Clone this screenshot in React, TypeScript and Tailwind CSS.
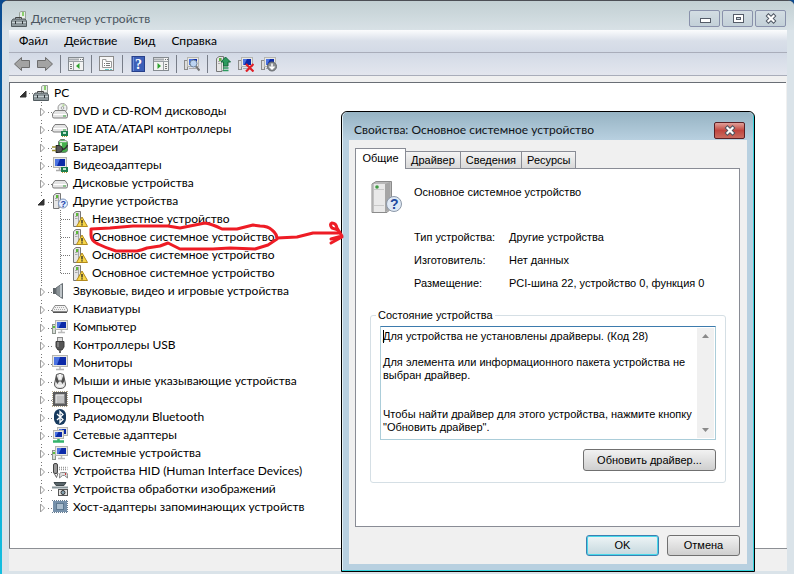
import type { ReactNode } from "react";

type IconName =
    | "pc"
    | "dvd"
    | "ide"
    | "battery"
    | "video"
    | "disk"
    | "other"
    | "warn"
    | "sound"
    | "keyboard"
    | "computer"
    | "usb"
    | "monitor"
    | "mouse"
    | "cpu"
    | "bluetooth"
    | "network"
    | "hid"
    | "imaging"
    | "storage";

interface Device {
    title: string;
    icon: IconName;
    children?: Device[];
}

const devices: Device[] = [
    { title: "DVD и CD-ROM дисководы", icon: "dvd" },
    { title: "IDE ATA/ATAPI контроллеры", icon: "ide" },
    { title: "Батареи", icon: "battery" },
    { title: "Видеоадаптеры", icon: "video" },
    { title: "Дисковые устройства", icon: "disk" },
    {
        title: "Другие устройства",
        icon: "other",
        children: [
            { title: "Неизвестное устройство", icon: "warn" },
            { title: "Основное системное устройство", icon: "warn" },
            { title: "Основное системное устройство", icon: "warn" },
            { title: "Основное системное устройство", icon: "warn" },
        ],
    },
    { title: "Звуковые, видео и игровые устройства", icon: "sound" },
    { title: "Клавиатуры", icon: "keyboard" },
    { title: "Компьютер", icon: "computer" },
    { title: "Контроллеры USB", icon: "usb" },
    { title: "Мониторы", icon: "monitor" },
    { title: "Мыши и иные указывающие устройства", icon: "mouse" },
    { title: "Процессоры", icon: "cpu" },
    { title: "Радиомодули Bluetooth", icon: "bluetooth" },
    { title: "Сетевые адаптеры", icon: "network" },
    { title: "Системные устройства", icon: "computer" },
    { title: "Устройства HID (Human Interface Devices)", icon: "hid" },
    { title: "Устройства обработки изображений", icon: "imaging" },
    { title: "Хост-адаптеры запоминающих устройств", icon: "storage" },
];

const statusText = `Для устройства не установлены драйверы. (Код 28)

Для элемента или информационного пакета устройства не
выбран драйвер.


Чтобы найти драйвер для этого устройства, нажмите кнопку
"Обновить драйвер".`;

/* ---------- icon parts ---------- */

function Drive({ y = 7 }: { y?: number }) {
    return (
        <g>
            <path d={`M3 ${y}H13L15.500 ${y + 3.500}V${y + 6}Q15.500 ${y + 7.500} 14 ${y + 7.500}H2Q.5 ${y + 7.500} .5 ${y + 6}V${y + 3.500}Z`} fill="#e4e4e4" stroke="#7d7d7d" />
            <path d={`M1.500 ${y + 4}H14.500`} stroke="#fff" />
            <path d={`M11 ${y + 5.500}h3`} stroke="#3aa03a" />
        </g>
    );
}

function Screen({ x = 0, y = 0, w = 16, h = 11 }: { x?: number; y?: number; w?: number; h?: number }) {
    return (
        <g>
            <rect x={x + 0.5} y={y + 0.5} width={w - 1} height={h - 1} fill="#e8e8e4" stroke="#b5b5b0" />
            <rect x={x + 2} y={y + 2} width={w - 4} height={h - 4} fill="#0c2aa8" />
            <path d={`M${x + 2} ${y + 2}h${(w - 4) / 2}l-3 ${h - 4}h-${(w - 4) / 2 - 3}z`} fill="#4a72e0" />
        </g>
    );
}

function Tower() {
    return (
        <g>
            <path d="M1.500 2.500L4 .5H8.500V13.500L7 15.500H1.500Z" fill="#e6e6e6" stroke="#777" />
            <path d="M6.500 2V15" stroke="#a5a5a5" />
            <path d="M3 5.500h2.500M3 7.500h2.500" stroke="#aaa" />
            <rect x="4" y="2" width="2" height="3" fill="#5dbb3a" />
        </g>
    );
}

function Card() {
    return (
        <g>
            <rect x="9" y="10" width="7" height="5" fill="#1c7f4e" />
            <rect x="11" y="11" width="3" height="2" fill="#bfe6cf" />
            <path d="M10.500 15v1M12.500 15v1M14.500 15v1" stroke="#b89a30" />
        </g>
    );
}

const icons: Record<IconName, ReactNode> = {
    pc: (
        <>
            <path d="M8.500 1.500L10 .5H14.500V9H8.500Z" fill="#e9eee9" stroke="#9aa39a" />
            <rect x="11" y="1" width="2" height="4" fill="#8bcf6d" />
            <path d="M4.500 8V6.500H10.500V8" fill="none" stroke="#444" />
            <path d="M2 8H14L15.500 10V15.500H.5V10Z" fill="#8c979b" stroke="#525b5f" />
            <path d="M1 11.500H15" stroke="#c7d0d3" />
            <path d="M4.500 10v3M11.500 10v3" stroke="#2f3538" />
        </>
    ),
    dvd: (
        <>
            <circle cx="10.500" cy="5" r="4.500" fill="#eef1f0" stroke="#979797" />
            <path d="M10.500 .8L13 2L10.500 5Z" fill="#b7d99c" />
            <circle cx="10.500" cy="5" r="1.300" fill="#fff" stroke="#a0a0a0" />
            <Drive y={7.5} />
        </>
    ),
    ide: (
        <>
            <Drive y={3.5} />
            <Card />
        </>
    ),
    battery: (
        <>
            <path d="M6.500 3Q6.500 1.500 8.500 1.500V.5H12.500V1.500Q15.500 1.500 15.500 3.500V11.500Q15.500 13.500 11 13.500Q6.500 13.500 6.500 11Z" fill="#45b04c" stroke="#6b7a6b" />
            <path d="M9 4v4" stroke="#c9f5bf" strokeWidth="2" />
            <path d="M7.500 2.500h7" stroke="#e6e6e6" strokeWidth="1.500" />
            <path d="M4 6.500Q10.500 6 10.500 10Q10.500 14 4 13.500Z" fill="#555" stroke="#222" />
            <path d="M0 8h4M0 11.500h4" stroke="#9a8f30" strokeWidth="1.500" />
            <path d="M10.500 10.500Q14 10 15.500 6" fill="none" stroke="#333" strokeWidth="1.500" />
        </>
    ),
    video: (
        <>
            <Screen x={1} w={14} h={11} />
            <path d="M4 13.500H9M7.500 11V13" stroke="#aaa" strokeWidth="1.500" />
            <Card />
        </>
    ),
    disk: <Drive y={5.5} />,
    other: (
        <>
            <Tower />
            <circle cx="11" cy="10.500" r="4.500" fill="#e6efff" stroke="#7990b8" />
            <text x="8.500" y="14" fontFamily="Liberation Sans" fontSize="9" fontWeight="bold" fill="#1c3fa8">?</text>
        </>
    ),
    warn: (
        <>
            <Tower />
            <path d="M10 6L15.500 15.500H4.500Z" fill="#f7d64a" stroke="#b28a1c" strokeLinejoin="round" />
            <path d="M10 9v3.500M10 13.300v1.200" stroke="#222" strokeWidth="1.300" />
        </>
    ),
    sound: (
        <>
            <rect x="1" y="5" width="4" height="6" fill="#5e6569" />
            <path d="M4 5L10.500 .5V15.500L4 11Z" fill="#8b9397" stroke="#666d72" />
            <path d="M9 2V14" stroke="#cfd5d8" strokeWidth="1.500" />
        </>
    ),
    keyboard: (
        <>
            <path d="M3 4.500H13L15.500 8.500V10.500H.5V8.500Z" fill="#f2f2f2" stroke="#888" strokeLinejoin="round" />
            <path d="M3 6.500H13M2 8.500H14" stroke="#aaa" strokeDasharray="1 1" />
            <path d="M1 11.500H15" stroke="#555" />
        </>
    ),
    computer: (
        <>
            <rect x="0.500" y="5.500" width="3" height="9" fill="#d6dcd6" stroke="#8c948c" />
            <rect x="1" y="7" width="2" height="2" fill="#5cc03c" />
            <Screen x={3} y={1} w={13} h={10} />
            <path d="M9.500 11V13M6 13.500H13" stroke="#bbb" strokeWidth="1.500" />
        </>
    ),
    usb: (
        <>
            <rect x="5.500" y="0.500" width="5" height="4" fill="#ddd" stroke="#888" />
            <path d="M4 4.500H12V10L10 13H6L4 10Z" fill="#555" stroke="#3c3c3c" />
            <path d="M6 5V10" stroke="#8e8e8e" strokeWidth="1.500" />
            <path d="M8 13V16" stroke="#666" strokeWidth="2" />
        </>
    ),
    monitor: (
        <>
            <Screen w={16} h={12} />
            <path d="M8 12V14M4 14.500H12" stroke="#b5b5b5" strokeWidth="1.500" />
        </>
    ),
    mouse: (
        <>
            <path d="M4.500 1.500Q8 -.5 11.500 1.500L13.500 11Q13.500 15.500 8 15.500Q2.500 15.500 2.500 11Z" fill="#e4e4e4" stroke="#555" />
            <path d="M4.500 2L6.500 7.500H9.500L11.500 2L12.500 8L10.500 11L9 8.500H7L5.500 11L3.500 8Z" fill="#4e4e4e" />
            <rect x="7" y="1" width="2" height="5" fill="#f5f5f5" />
            <path d="M5 12.500Q8 14 11 12.500" fill="none" stroke="#fff" />
        </>
    ),
    cpu: (
        <>
            <path d="M0 .5H16M0 15.500H16M.5 0V16M15.500 0V16" stroke="#b3a88c" strokeDasharray="1 1" />
            <rect x="1" y="1" width="14" height="14" fill="#5c5c5c" />
            <rect x="3.500" y="3.500" width="9" height="9" fill="#c2c2c2" stroke="#8a8a8a" />
            <path d="M4 12V4H12" fill="none" stroke="#eee" />
        </>
    ),
    bluetooth: (
        <>
            <rect x="2" y="0" width="12" height="16" rx="6" fill="#173a5e" />
            <path d="M5 5L11 10.500L8 13.500V2.500L11 5.500L5 11" fill="none" stroke="#fff" strokeWidth="1.300" />
        </>
    ),
    network: (
        <>
            <Screen x={5} y={0} w={11} h={9} />
            <Screen x={1} y={3} w={11} h={9} />
            <path d="M1 14.500H12M6.500 12V14" stroke="#34b46c" strokeWidth="2.500" />
        </>
    ),
    hid: (
        <>
            <rect x="1.500" y="0.500" width="4" height="10" rx="1.500" fill="#999" stroke="#444" />
            <path d="M2 10L4.500 14.500L6 10" fill="none" stroke="#666" />
            <path d="M7 4.500H15.500M7 6.500H15.500" stroke="#999" strokeWidth="1.500" strokeDasharray="1 1" />
            <path d="M7.500 15Q7 9 9.500 9.500H13.500Q16 9 15.500 15L12.500 12.500H10.500Z" fill="#dedede" stroke="#888" />
            <rect x="13" y="10" width="1" height="2" fill="#c33" />
        </>
    ),
    imaging: (
        <>
            <path d="M2 1.500H14L12 4.500H4Z" fill="#59656a" stroke="#3e484c" />
            <path d="M0 6.500H16" stroke="#89969b" strokeWidth="2" />
            <rect x="6.500" y="8.500" width="9" height="6" fill="#e2e2e2" stroke="#555" />
            <circle cx="11" cy="11.500" r="2" fill="#8aa5b4" stroke="#333" />
        </>
    ),
    storage: (
        <>
            <path d="M0 1.500H16M0 13.500H16M15.500 2V13" stroke="#667d92" strokeDasharray="1 1" />
            <rect x="1" y="2" width="14" height="11" fill="#7590aa" />
            <rect x="4.500" y="4.500" width="7" height="6" fill="#a9bccd" stroke="#5c7890" />
        </>
    ),
};

function DeviceIcon({ name }: { name: IconName }) {
    return (
        <svg className="size-4 shrink-0" viewBox="0 0 16 16" aria-hidden="true">
            {icons[name]}
        </svg>
    );
}

/* Dotted guide lines with the expander triangle on top */
function Branch({ open, last }: { open?: boolean; last?: boolean }) {
    return (
        <svg className="h-[18px] w-[15px] shrink-0" viewBox="0 0 15 18" aria-hidden="true">
            <path d={`M4.500 0V${last ? 9 : 18}M11 10.500H15`} stroke="#777" strokeDasharray="1 2" />
            <rect x="1" y="4" width="8" height="12" fill="#fff" />
            {open ? (
                <path d="M7 7V13H1Z" fill="#333" stroke="#333" strokeLinejoin="round" />
            ) : (
                <path d="M3.500 6V14L7.500 10Z" fill="#fff" stroke="#999" />
            )}
        </svg>
    );
}

function ChildBranch({ last }: { last: boolean }) {
    return (
        <svg className="h-[18px] w-[35px] shrink-0" viewBox="0 0 35 18" aria-hidden="true">
            <path d={`M4.500 0V18M23.500 0V${last ? 10 : 18}M24 9.500H34`} stroke="#777" strokeDasharray="1 1" />
        </svg>
    );
}

function TreeRow({ device, last }: { device: Device; last: boolean }) {
    return (
        <li role="treeitem" aria-expanded={device.children ? true : undefined}>
            <div className="flex h-[18px] items-center pl-[27px]">
                <Branch open={!!device.children} last={last} />
                <DeviceIcon name={device.icon} />
                <span className="pl-[5px] whitespace-nowrap">{device.title}</span>
            </div>
            {device.children && (
                <ul role="group">
                    {device.children.map((child, i) => (
                        <li key={i} role="treeitem" className="flex h-[18px] items-center pl-[27px]">
                            <ChildBranch last={i === device.children!.length - 1} />
                            <DeviceIcon name={child.icon} />
                            <span className="pl-1 whitespace-nowrap">{child.title}</span>
                        </li>
                    ))}
                </ul>
            )}
        </li>
    );
}

/* ---------- toolbar ---------- */

function ToolButton({ label, children }: { label: string; children: ReactNode }) {
    return (
        <button type="button" aria-label={label} className="flex h-[22px] w-[23px] items-center justify-center">
            <svg className="size-4" viewBox="0 0 16 16" aria-hidden="true">
                {children}
            </svg>
        </button>
    );
}

function Separator() {
    return (
        <div className="flex w-2 justify-center">
            <div className="h-[18px] w-px bg-[#777d88]" />
        </div>
    );
}

function ConsoleFrame() {
    return (
        <>
            <rect x="0.500" y="1.500" width="15" height="13" fill="#f3f3f3" stroke="#858b90" />
            <path d="M1 3.500H11" stroke="#a8adb2" strokeWidth="2" />
            <path d="M12 3.500h3" stroke="#6d7378" strokeDasharray="1 1" />
            <path d="M1 5.500H15" stroke="#9aa0a5" />
        </>
    );
}

function MiniPc() {
    return (
        <>
            <rect x="0.500" y="4.500" width="3" height="9" fill="#ddd" stroke="#8c8c8c" />
            <Screen x={3} y={1} w={12} h={10} />
            <path d="M5 12.500H12" stroke="#aaa" />
        </>
    );
}

function Toolbar() {
    return (
        <div role="toolbar" className="flex h-[22px] items-center bg-gradient-to-b from-[#d3dae6] to-[#e3e6ee] pl-px">
            <ToolButton label="Назад">
                <path d="M.5 8L7.500 1.500V4.500H15.500V11.500H7.500V14.500Z" fill="#a3a3a3" stroke="#6d6d6d" strokeLinejoin="round" />
            </ToolButton>
            <ToolButton label="Вперед">
                <path d="M15.500 8L8.500 1.500V4.500H.5V11.500H8.500V14.500Z" fill="#a3a3a3" stroke="#6d6d6d" strokeLinejoin="round" />
            </ToolButton>
            <Separator />
            <ToolButton label="Показать дерево консоли">
                <ConsoleFrame />
                <path d="M5.500 6V14" stroke="#9aa0a5" />
                <path d="M2 8.500h2M2 10.500h2M2 12.500h2" stroke="#777" />
                <path d="M11.500 7V13L8 10Z" fill="#2fa32f" />
            </ToolButton>
            <Separator />
            <ToolButton label="Свойства">
                <rect x="0.500" y="0.500" width="14" height="14" fill="#f6f6f6" stroke="#8a8a8a" />
                <path d="M3.500 11.500V3.500H7V5.500H12.500V11.500Z" fill="#fff" stroke="#999" />
                <path d="M5 7.500h1M7 7.500h4M5 9.500h1M7 9.500h4" stroke="#777" />
                <path d="M6 13.500h4M11 13.500h2" stroke="#5fc5c5" />
            </ToolButton>
            <Separator />
            <ToolButton label="Справка">
                <rect x="2" y="0.500" width="12.500" height="15" fill="#3d60b8" stroke="#27408b" />
                <path d="M3.500 1V15" stroke="#6f8fd8" />
                <text x="5" y="13" fontFamily="Liberation Serif" fontSize="14" fontWeight="bold" fill="#fff">?</text>
            </ToolButton>
            <ToolButton label="Показать панель действий">
                <ConsoleFrame />
                <path d="M10.500 6V14" stroke="#9aa0a5" />
                <path d="M12 8.500h2M12 10.500h2M12 12.500h2" stroke="#777" />
                <path d="M4.500 7V13L8 10Z" fill="#2fa32f" />
            </ToolButton>
            <Separator />
            <ToolButton label="Обновить конфигурацию оборудования">
                <MiniPc />
                <circle cx="9.500" cy="7.500" r="3.500" fill="#bcd4f2" stroke="#70859c" />
                <path d="M12 10.500L15.500 14.500" stroke="#777" strokeWidth="2" />
            </ToolButton>
            <Separator />
            <ToolButton label="Обновить драйверы">
                <Tower />
                <path d="M10.500 1L15.500 6H13V10H8.500V6H6Z" fill="#2c9a5e" stroke="#17683b" />
                <path d="M8 12H13.500M8 14.500H13.500" stroke="#2c9a5e" strokeWidth="1.500" />
            </ToolButton>
            <ToolButton label="Удалить">
                <MiniPc />
                <path d="M8 8L15.500 15.500M15.500 8L8 15.500" stroke="#e01f26" strokeWidth="2.200" />
            </ToolButton>
            <ToolButton label="Отключить">
                <MiniPc />
                <circle cx="11" cy="10.500" r="4.500" fill="#8b8f93" stroke="#64686c" />
                <path d="M11 7.500V12M8.500 10.500L11 13L13.500 10.500" fill="none" stroke="#fff" strokeWidth="1.500" />
            </ToolButton>
        </div>
    );
}

/* ---------- main window ---------- */

function CaptionButton({ label, children }: { label: string; children: ReactNode }) {
    return (
        <button
            type="button"
            aria-label={label}
            className="flex h-[17px] w-[31px] items-center justify-center rounded-[2px] border border-[#8991ab] bg-gradient-to-b from-[#d3dde3] to-[#c3d0d8]"
        >
            <svg className="h-[11px] w-3" viewBox="0 0 12 11" aria-hidden="true">
                {children}
            </svg>
        </button>
    );
}

function CloseGlyph() {
    return (
        <>
            <path d="M2 1.500L10 9.500M10 1.500L2 9.500" stroke="#4d5561" strokeWidth="4" />
            <path d="M2.700 2.200L9.300 8.800M9.300 2.200L2.700 8.800" stroke="#fff" strokeWidth="2.200" />
        </>
    );
}

function ManagerWindow() {
    return (
        <main className="flex min-h-screen flex-1 flex-col rounded-t-[6px] border-t border-[#4c4f55] bg-[#dae3e9] px-[7px]">

            <header className="-mx-[7px] flex h-[29px] items-center rounded-t-[5px] bg-gradient-to-b from-[#c2d0d3] to-[#d8e1e6] pt-1.5 pr-2 pl-[9px]">
                <DeviceIcon name="pc" />
                <h1 className="flex-1 pl-1 text-[12px] text-[#4b5560]">Диспетчер устройств</h1>
                <div className="flex gap-0.5">
                    <CaptionButton label="Свернуть">
                        <rect x="1.500" y="5.500" width="10" height="4" fill="#fff" stroke="#555c68" />
                    </CaptionButton>
                    <CaptionButton label="Развернуть">
                        <rect x="1.500" y="1.500" width="10" height="8" fill="#fff" stroke="#555c68" />
                        <rect x="4.500" y="4.500" width="4" height="2" fill="#c9d5dc" stroke="#555c68" />
                    </CaptionButton>
                    <CaptionButton label="Закрыть">
                        <CloseGlyph />
                    </CaptionButton>
                </div>
            </header>

            <nav className="flex h-[23px] items-center gap-4 border-b border-[#a9adba] bg-gradient-to-b from-[#fbfcfd] via-[#d9dfe9] to-[#d3dae6] pl-2.5">
                <button type="button">Файл</button>
                <button type="button">Действие</button>
                <button type="button">Вид</button>
                <button type="button">Справка</button>
            </nav>

            <Toolbar />

            <section className="flex flex-1 flex-col border-t border-[#a9adba] bg-[#f0f0f0] pt-1.5 pr-px">
                <ul role="tree" className="flex-1 border-t border-l border-[#696e75] bg-white pt-px">
                    <li role="treeitem" aria-expanded="true">
                        <div className="flex h-[18px] items-center pl-[9px]">
                            <svg className="h-[18px] w-[14px]" viewBox="0 0 14 18" aria-hidden="true">
                                <path d="M7 7V13H1Z" fill="#333" stroke="#333" strokeLinejoin="round" />
                                <path d="M10 9.500H14" stroke="#888" strokeDasharray="1 2" />
                            </svg>
                            <DeviceIcon name="pc" />
                            <span className="pl-[5px]">PC</span>
                        </div>
                        <ul role="group">
                            {devices.map((device, i) => (
                                <TreeRow key={device.title} device={device} last={i === devices.length - 1} />
                            ))}
                        </ul>
                    </li>
                </ul>
            </section>

            <footer className="mb-[3px] h-[23px] border-t border-[#8c8f94] bg-[#f0f0f0]" />

        </main>
    );
}

/* ---------- properties dialog ---------- */

const tabs = ["Драйвер", "Сведения", "Ресурсы"];

const info = [
    ["Тип устройства:", "Другие устройства"],
    ["Изготовитель:", "Нет данных"],
    ["Размещение:", "PCI-шина 22, устройство 0, функция 0"],
];

function PropertiesDialog() {
    return (
        <div
            role="dialog"
            aria-labelledby="dialog-title"
            className="absolute top-[111px] left-[341px] w-[414px] rounded-t-[6px] border border-black bg-[#b8d0e0] px-[7px] pb-[7px] text-[11px] shadow-[inset_-1px_-1px_0_#35d3dc,inset_1px_1px_0_#e3f1f6]"
            style={{ fontFamily: '"Liberation Sans", Arial, sans-serif' }}
        >
            <header className="-mx-1.5 flex h-7 items-center rounded-t-[5px] bg-gradient-to-b from-[#96b3c3] to-[#b8d0e0] px-1.5 pt-2">
                <h2
                    id="dialog-title"
                    className="flex-1 pl-[5px] text-[12px] text-[#101418]"
                    style={{ fontFamily: 'Lato, Roboto, sans-serif' }}
                >
                    Свойства: Основное системное устройство
                </h2>
                <button
                    type="button"
                    aria-label="Закрыть"
                    className="mr-0.5 flex h-[17px] w-[31px] items-center justify-center rounded-[2px] border border-[#5a1f24] bg-gradient-to-b from-[#e0a09a] via-[#c0453f] to-[#c96a5f]"
                >
                    <svg className="h-[11px] w-3" viewBox="0 0 12 11" aria-hidden="true">
                        <CloseGlyph />
                    </svg>
                </button>
            </header>

            <div className="bg-[#f0f0f0] pt-2 pr-[7px] pb-2 pl-1.5">

                <div role="tablist" className="flex items-end">
                    <button
                        type="button"
                        role="tab"
                        aria-selected="true"
                        className="relative z-10 -mb-px h-[21px] w-[51px] border border-b-0 border-[#898c95] bg-white pb-0.5"
                    >
                        Общие
                    </button>
                    {tabs.map((tab) => (
                        <button
                            key={tab}
                            type="button"
                            role="tab"
                            aria-selected="false"
                            className="h-[17px] border border-b-0 border-l-0 border-[#898c95] bg-gradient-to-b from-[#f4f4f4] to-[#d9d9d9] px-[5px]"
                        >
                            {tab}
                        </button>
                    ))}
                </div>

                <div role="tabpanel" className="h-[359px] border border-[#898c95] bg-white px-3.5 pt-3">
                    <div className="flex h-8 gap-3">
                        <svg className="size-8" viewBox="0 0 32 32" aria-hidden="true">
                            <path d="M2 3L6 .5H21.500V27L17 31.500H2Z" fill="#b9b9b9" stroke="#8b8b8b" />
                            <path d="M2.500 3H15V31H2.500Z" fill="#e9e9e9" />
                            <path d="M3 3V31" stroke="#9a9a9a" />
                            <path d="M15 3L20 1V28L15 31Z" fill="#a5a5a5" />
                            <path d="M4 8.500H14M4 24.500H14" stroke="#c9c9c9" />
                            <circle cx="7" cy="6" r="1.800" fill="#3f9b42" />
                            <circle cx="24" cy="23" r="7.500" fill="#dfe9f5" stroke="#8c98a8" />
                            <text x="20" y="28" fontFamily="Liberation Sans" fontSize="14" fontWeight="bold" fill="#234a9e">?</text>
                        </svg>
                        <p className="pt-[3px] leading-4">Основное системное устройство</p>
                    </div>

                    <dl className="mt-[13px] ml-11">
                        {info.map(([label, value]) => (
                            <div key={label} className="flex h-[23px] items-center">
                                <dt className="w-[95px]">{label}</dt>
                                <dd className="whitespace-nowrap">{value}</dd>
                            </div>
                        ))}
                    </dl>

                    <fieldset className="mt-3 -mr-px ml-0 rounded-[3px] border border-[#d5dfe5] px-[9px] pb-[11px]">
                        <legend className="-ml-1 px-0.5 leading-4">
                            <label htmlFor="status">Состояние устройства</label>
                        </legend>
                        <div className="relative mt-[3px] flex h-[114px] border border-[#abcdd9] border-t-[#3d7bad] bg-white p-px">
                            <textarea
                                id="status"
                                readOnly
                                value={statusText}
                                className="flex-1 resize-none overflow-hidden pt-0.5 pl-px leading-[13px] whitespace-pre outline-none"
                            />
                            {/* text caret */}
                            <span className="absolute top-[3px] left-0.5 h-[13px] w-px bg-black" />
                            <div className="flex w-[17px] flex-col justify-between bg-[#f0f0f0]">
                                <button type="button" aria-label="Вверх" className="flex h-4 items-center justify-center">
                                    <svg className="h-1 w-[7px]" viewBox="0 0 7 4">
                                        <path d="M0 4L3.500 0L7 4Z" fill="#8a8a8a" />
                                    </svg>
                                </button>
                                <button type="button" aria-label="Вниз" className="flex h-4 items-center justify-center">
                                    <svg className="h-1 w-[7px]" viewBox="0 0 7 4">
                                        <path d="M0 0L3.500 4L7 0Z" fill="#8a8a8a" />
                                    </svg>
                                </button>
                            </div>
                        </div>
                        <div className="mt-[9px] flex justify-end">
                            <button
                                type="button"
                                className="h-[22px] w-[133px] rounded-[3px] border border-[#707070] bg-gradient-to-b from-[#f2f2f2] to-[#cfcfcf]"
                            >
                                Обновить драйвер...
                            </button>
                        </div>
                    </fieldset>
                </div>

                <div className="mt-2 flex justify-end gap-2">
                    <button
                        type="button"
                        className="h-[21px] w-[73px] rounded-[3px] border border-[#3c7fb1] bg-gradient-to-b from-[#eef4f6] to-[#c5d8de] shadow-[inset_0_0_0_1px_#48d8ea]"
                    >
                        OK
                    </button>
                    <button
                        type="button"
                        className="h-[21px] w-[73px] rounded-[3px] border border-[#707070] bg-gradient-to-b from-[#f2f2f2] to-[#cfcfcf]"
                    >
                        Отмена
                    </button>
                </div>

            </div>
        </div>
    );
}

/* Hand-drawn red loop with an arrow to the dialog */
function Marker() {
    return (
        <svg
            className="pointer-events-none absolute top-[215px] left-[80px] h-[45px] w-[270px]"
            viewBox="80 215 270 45"
            fill="none"
            stroke="#ee1c25"
            strokeWidth="3"
            strokeLinecap="round"
            strokeLinejoin="round"
            aria-hidden="true"
        >
            <path d="M91 229L91 235Q91 241 98 244Q106 248 116 251H137Q142 250 147 248L160 246L168 243L180 249H213L230 248L255 249L268 245L277 239Q277 234 272 230Q268 226 260 226L253 225L237 229H222Q212 224 205 223Q195 225 180 228L168 226H133L110 228Z" />
            <path d="M277 238L297 237L313 233H340" />
            <path d="M340 232Q337 229 332 228Q329 224 332 223Q336 223 337 228L342 236L331 239M342 237L331 243" />
        </svg>
    );
}

export default function App() {
    return (
        <div
            className="relative flex min-h-screen bg-gradient-to-b from-[#0b4a8f] via-[#0a8cc8] to-[#12bfe0] pl-0.5 text-[12px] text-black"
            style={{ fontFamily: 'Lato, Roboto, sans-serif' }}
        >
            <ManagerWindow />
            <PropertiesDialog />
            <Marker />
        </div>
    );
}
